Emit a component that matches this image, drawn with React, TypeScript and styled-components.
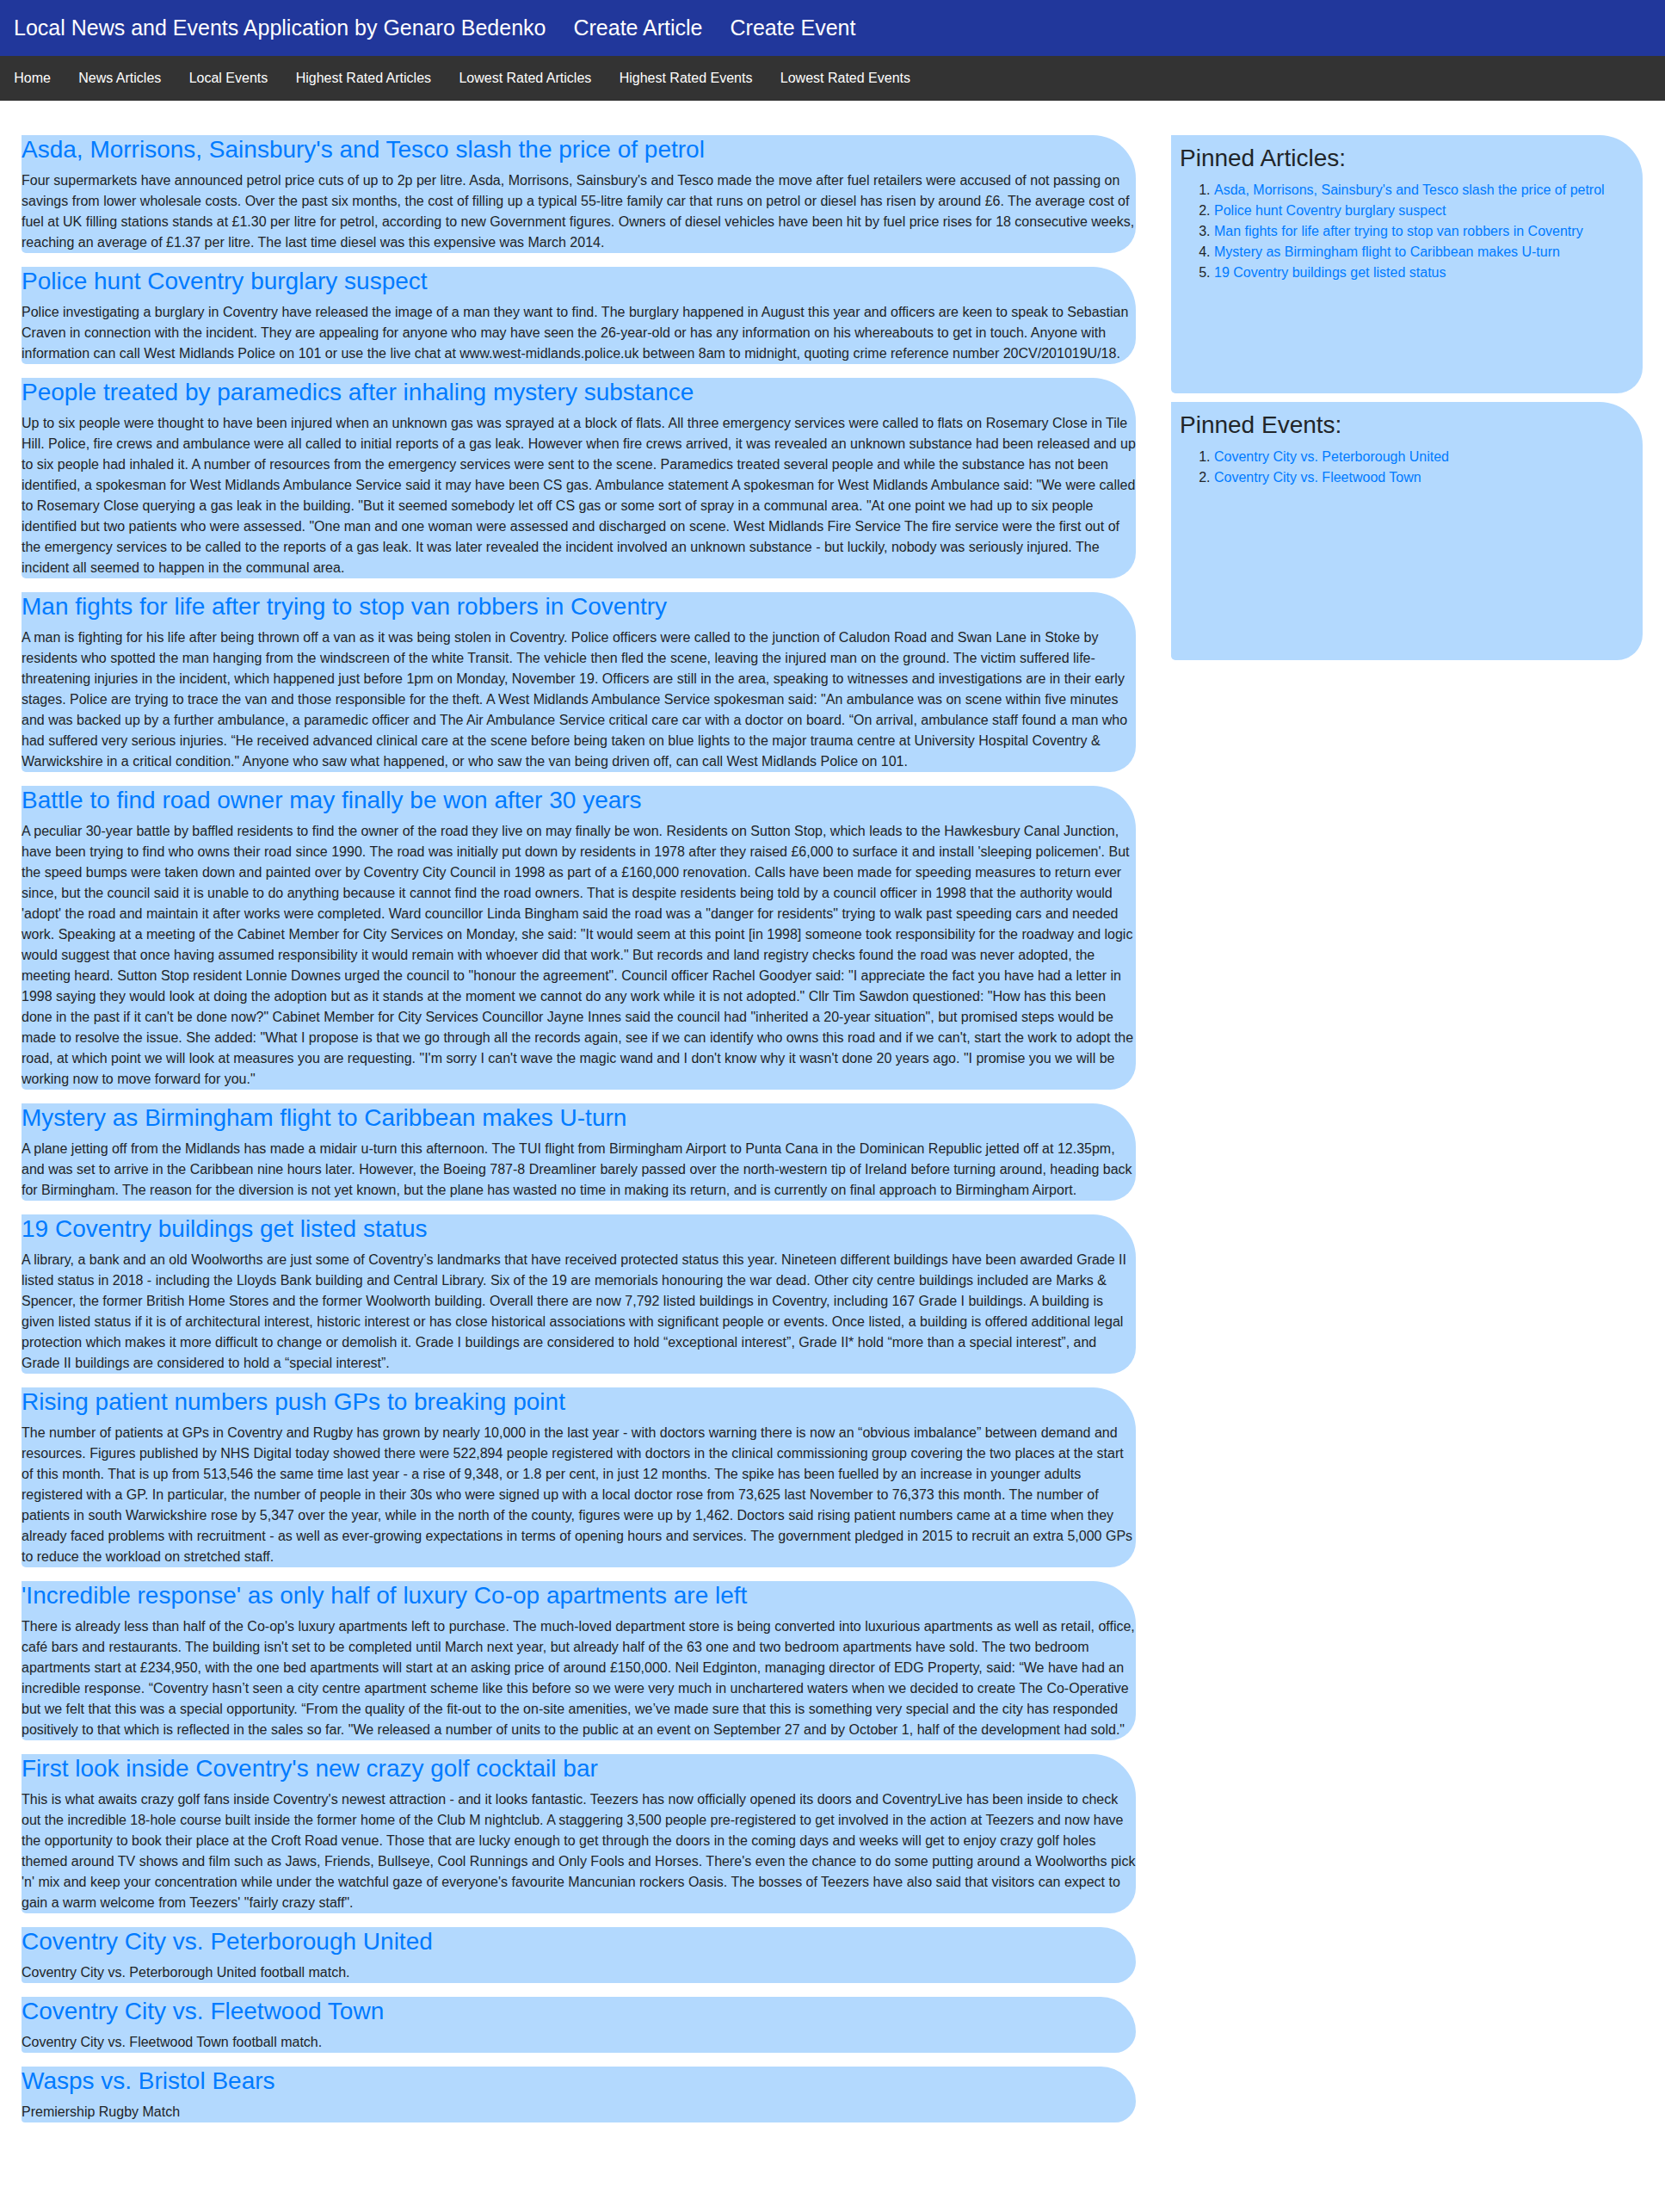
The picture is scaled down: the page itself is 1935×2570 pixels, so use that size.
import React from "react";
import styled, { createGlobalStyle } from "styled-components";

const GlobalStyle = createGlobalStyle`
  html, body {
    margin: 0;
    padding: 0;
    background: #ffffff;
  }
  body {
    font-family: "Liberation Sans", Arial, sans-serif;
    font-size: 16px;
    line-height: 1.5;
    color: #212529;
  }
  * { box-sizing: border-box; }
`;

const TopBar = styled.header`
  height: 65px;
  background: #21379b;
  display: flex;
  align-items: center;
  padding-bottom: 2px;
`;

const TopLink = styled.a`
  color: #ffffff;
  font-size: 25px;
  line-height: 1.2;
  padding: 0 16px;
  text-decoration: none;
`;

const NavBar = styled.nav`
  height: 52px;
  background: #333333;
  display: flex;
  align-items: center;
`;

const NavLink = styled.a`
  color: #ffffff;
  font-size: 16px;
  line-height: 24px;
  padding: 14px 16.2px;
  text-decoration: none;
`;

const Main = styled.main`
  display: flex;
  align-items: flex-start;
  gap: 41px;
  padding: 40px 26px 80px 25px;
`;

const Feed = styled.section`
  width: 1295px;
  flex: none;
`;

const Card = styled.article`
  background: #b3d9fe;
  border-radius: 0 50px 30px 5px;
  margin: 0;
`;

const CardTitle = styled.h3`
  margin: 0 0 8px;
  font-size: 28px;
  font-weight: 400;
  line-height: 33px;
  color: #007bff;
`;

const CardText = styled.p`
  margin: 0 0 16px;
  font-size: 16px;
  line-height: 24px;
  color: #212529;
`;

const Sidebar = styled.aside`
  flex: 1;
  display: flex;
  flex-direction: column;
  gap: 10px;
`;

const PinBox = styled.div`
  height: 300px;
  background: #b3d9fe;
  border-radius: 0 50px 30px 5px;
  padding: 10px;
`;

const PinTitle = styled.h3`
  margin: 0 0 8px;
  font-size: 28px;
  font-weight: 400;
  line-height: 1.2;
  color: #212529;
`;

const PinList = styled.ol`
  margin: 0;
  padding-left: 40px;
  font-size: 16px;
  line-height: 24px;
`;

const PinLink = styled.a`
  color: #007bff;
  text-decoration: none;
`;

type Item = { title: string; body: string };

const articles: Item[] = [
  {
    title: "Asda, Morrisons, Sainsbury's and Tesco slash the price of petrol",
    body: "Four supermarkets have announced petrol price cuts of up to 2p per litre. Asda, Morrisons, Sainsbury's and Tesco made the move after fuel retailers were accused of not passing on savings from lower wholesale costs. Over the past six months, the cost of filling up a typical 55-litre family car that runs on petrol or diesel has risen by around £6. The average cost of fuel at UK filling stations stands at £1.30 per litre for petrol, according to new Government figures. Owners of diesel vehicles have been hit by fuel price rises for 18 consecutive weeks, reaching an average of £1.37 per litre. The last time diesel was this expensive was March 2014.",
  },
  {
    title: "Police hunt Coventry burglary suspect",
    body: "Police investigating a burglary in Coventry have released the image of a man they want to find. The burglary happened in August this year and officers are keen to speak to Sebastian Craven in connection with the incident. They are appealing for anyone who may have seen the 26-year-old or has any information on his whereabouts to get in touch. Anyone with information can call West Midlands Police on 101 or use the live chat at www.west-midlands.police.uk between 8am to midnight, quoting crime reference number 20CV/201019U/18.",
  },
  {
    title: "People treated by paramedics after inhaling mystery substance",
    body: "Up to six people were thought to have been injured when an unknown gas was sprayed at a block of flats. All three emergency services were called to flats on Rosemary Close in Tile Hill. Police, fire crews and ambulance were all called to initial reports of a gas leak. However when fire crews arrived, it was revealed an unknown substance had been released and up to six people had inhaled it. A number of resources from the emergency services were sent to the scene. Paramedics treated several people and while the substance has not been identified, a spokesman for West Midlands Ambulance Service said it may have been CS gas. Ambulance statement A spokesman for West Midlands Ambulance said: \"We were called to Rosemary Close querying a gas leak in the building. \"But it seemed somebody let off CS gas or some sort of spray in a communal area. \"At one point we had up to six people identified but two patients who were assessed. \"One man and one woman were assessed and discharged on scene. West Midlands Fire Service The fire service were the first out of the emergency services to be called to the reports of a gas leak. It was later revealed the incident involved an unknown substance - but luckily, nobody was seriously injured. The incident all seemed to happen in the communal area.",
  },
  {
    title: "Man fights for life after trying to stop van robbers in Coventry",
    body: "A man is fighting for his life after being thrown off a van as it was being stolen in Coventry. Police officers were called to the junction of Caludon Road and Swan Lane in Stoke by residents who spotted the man hanging from the windscreen of the white Transit. The vehicle then fled the scene, leaving the injured man on the ground. The victim suffered life-threatening injuries in the incident, which happened just before 1pm on Monday, November 19. Officers are still in the area, speaking to witnesses and investigations are in their early stages. Police are trying to trace the van and those responsible for the theft. A West Midlands Ambulance Service spokesman said: \"An ambulance was on scene within five minutes and was backed up by a further ambulance, a paramedic officer and The Air Ambulance Service critical care car with a doctor on board. “On arrival, ambulance staff found a man who had suffered very serious injuries. “He received advanced clinical care at the scene before being taken on blue lights to the major trauma centre at University Hospital Coventry & Warwickshire in a critical condition.\" Anyone who saw what happened, or who saw the van being driven off, can call West Midlands Police on 101.",
  },
  {
    title: "Battle to find road owner may finally be won after 30 years",
    body: "A peculiar 30-year battle by baffled residents to find the owner of the road they live on may finally be won. Residents on Sutton Stop, which leads to the Hawkesbury Canal Junction, have been trying to find who owns their road since 1990. The road was initially put down by residents in 1978 after they raised £6,000 to surface it and install 'sleeping policemen'. But the speed bumps were taken down and painted over by Coventry City Council in 1998 as part of a £160,000 renovation. Calls have been made for speeding measures to return ever since, but the council said it is unable to do anything because it cannot find the road owners. That is despite residents being told by a council officer in 1998 that the authority would 'adopt' the road and maintain it after works were completed. Ward councillor Linda Bingham said the road was a \"danger for residents\" trying to walk past speeding cars and needed work. Speaking at a meeting of the Cabinet Member for City Services on Monday, she said: \"It would seem at this point [in 1998] someone took responsibility for the roadway and logic would suggest that once having assumed responsibility it would remain with whoever did that work.\" But records and land registry checks found the road was never adopted, the meeting heard. Sutton Stop resident Lonnie Downes urged the council to \"honour the agreement\". Council officer Rachel Goodyer said: \"I appreciate the fact you have had a letter in 1998 saying they would look at doing the adoption but as it stands at the moment we cannot do any work while it is not adopted.\" Cllr Tim Sawdon questioned: \"How has this been done in the past if it can't be done now?\" Cabinet Member for City Services Councillor Jayne Innes said the council had \"inherited a 20-year situation\", but promised steps would be made to resolve the issue. She added: \"What I propose is that we go through all the records again, see if we can identify who owns this road and if we can't, start the work to adopt the road, at which point we will look at measures you are requesting. \"I'm sorry I can't wave the magic wand and I don't know why it wasn't done 20 years ago. \"I promise you we will be working now to move forward for you.\"",
  },
  {
    title: "Mystery as Birmingham flight to Caribbean makes U-turn",
    body: "A plane jetting off from the Midlands has made a midair u-turn this afternoon. The TUI flight from Birmingham Airport to Punta Cana in the Dominican Republic jetted off at 12.35pm, and was set to arrive in the Caribbean nine hours later. However, the Boeing 787-8 Dreamliner barely passed over the north-western tip of Ireland before turning around, heading back for Birmingham. The reason for the diversion is not yet known, but the plane has wasted no time in making its return, and is currently on final approach to Birmingham Airport.",
  },
  {
    title: "19 Coventry buildings get listed status",
    body: "A library, a bank and an old Woolworths are just some of Coventry’s landmarks that have received protected status this year. Nineteen different buildings have been awarded Grade II listed status in 2018 - including the Lloyds Bank building and Central Library. Six of the 19 are memorials honouring the war dead. Other city centre buildings included are Marks & Spencer, the former British Home Stores and the former Woolworth building. Overall there are now 7,792 listed buildings in Coventry, including 167 Grade I buildings. A building is given listed status if it is of architectural interest, historic interest or has close historical associations with significant people or events. Once listed, a building is offered additional legal protection which makes it more difficult to change or demolish it. Grade I buildings are considered to hold “exceptional interest”, Grade II* hold “more than a special interest”, and Grade II buildings are considered to hold a “special interest”.",
  },
  {
    title: "Rising patient numbers push GPs to breaking point",
    body: "The number of patients at GPs in Coventry and Rugby has grown by nearly 10,000 in the last year - with doctors warning there is now an “obvious imbalance” between demand and resources. Figures published by NHS Digital today showed there were 522,894 people registered with doctors in the clinical commissioning group covering the two places at the start of this month. That is up from 513,546 the same time last year - a rise of 9,348, or 1.8 per cent, in just 12 months. The spike has been fuelled by an increase in younger adults registered with a GP. In particular, the number of people in their 30s who were signed up with a local doctor rose from 73,625 last November to 76,373 this month. The number of patients in south Warwickshire rose by 5,347 over the year, while in the north of the county, figures were up by 1,462. Doctors said rising patient numbers came at a time when they already faced problems with recruitment - as well as ever-growing expectations in terms of opening hours and services. The government pledged in 2015 to recruit an extra 5,000 GPs to reduce the workload on stretched staff.",
  },
  {
    title: "'Incredible response' as only half of luxury Co-op apartments are left",
    body: "There is already less than half of the Co-op's luxury apartments left to purchase. The much-loved department store is being converted into luxurious apartments as well as retail, office, café bars and restaurants. The building isn't set to be completed until March next year, but already half of the 63 one and two bedroom apartments have sold. The two bedroom apartments start at £234,950, with the one bed apartments will start at an asking price of around £150,000. Neil Edginton, managing director of EDG Property, said: “We have had an incredible response. “Coventry hasn’t seen a city centre apartment scheme like this before so we were very much in unchartered waters when we decided to create The Co-Operative but we felt that this was a special opportunity. “From the quality of the fit-out to the on-site amenities, we’ve made sure that this is something very special and the city has responded positively to that which is reflected in the sales so far. \"We released a number of units to the public at an event on September 27 and by October 1, half of the development had sold.\"",
  },
  {
    title: "First look inside Coventry's new crazy golf cocktail bar",
    body: "This is what awaits crazy golf fans inside Coventry's newest attraction - and it looks fantastic. Teezers has now officially opened its doors and CoventryLive has been inside to check out the incredible 18-hole course built inside the former home of the Club M nightclub. A staggering 3,500 people pre-registered to get involved in the action at Teezers and now have the opportunity to book their place at the Croft Road venue. Those that are lucky enough to get through the doors in the coming days and weeks will get to enjoy crazy golf holes themed around TV shows and film such as Jaws, Friends, Bullseye, Cool Runnings and Only Fools and Horses. There's even the chance to do some putting around a Woolworths pick 'n' mix and keep your concentration while under the watchful gaze of everyone's favourite Mancunian rockers Oasis. The bosses of Teezers have also said that visitors can expect to gain a warm welcome from Teezers' \"fairly crazy staff\".",
  },
];

const events: Item[] = [
  {
    title: "Coventry City vs. Peterborough United",
    body: "Coventry City vs. Peterborough United football match.",
  },
  {
    title: "Coventry City vs. Fleetwood Town",
    body: "Coventry City vs. Fleetwood Town football match.",
  },
  { title: "Wasps vs. Bristol Bears", body: "Premiership Rugby Match" },
];

const pinnedArticles = [0, 1, 3, 5, 6].map((i) => articles[i].title);
const pinnedEvents = [events[0].title, events[1].title];

const navItems = [
  "Home",
  "News Articles",
  "Local Events",
  "Highest Rated Articles",
  "Lowest Rated Articles",
  "Highest Rated Events",
  "Lowest Rated Events",
];

export default function App() {
  return (
    <>
      <GlobalStyle />
      <TopBar>
        <TopLink href="#">Local News and Events Application by Genaro Bedenko</TopLink>
        <TopLink href="#">Create Article</TopLink>
        <TopLink href="#">Create Event</TopLink>
      </TopBar>
      <NavBar>
        {navItems.map((n) => (
          <NavLink key={n} href="#">
            {n}
          </NavLink>
        ))}
      </NavBar>
      <Main>
        <Feed>
          {[...articles, ...events].map((a) => (
            <Card key={a.title}>
              <CardTitle>{a.title}</CardTitle>
              <CardText>{a.body}</CardText>
            </Card>
          ))}
        </Feed>
        <Sidebar>
          <PinBox>
            <PinTitle>Pinned Articles:</PinTitle>
            <PinList>
              {pinnedArticles.map((t) => (
                <li key={t}>
                  <PinLink href="#">{t}</PinLink>
                </li>
              ))}
            </PinList>
          </PinBox>
          <PinBox>
            <PinTitle>Pinned Events:</PinTitle>
            <PinList>
              {pinnedEvents.map((t) => (
                <li key={t}>
                  <PinLink href="#">{t}</PinLink>
                </li>
              ))}
            </PinList>
          </PinBox>
        </Sidebar>
      </Main>
    </>
  );
}
